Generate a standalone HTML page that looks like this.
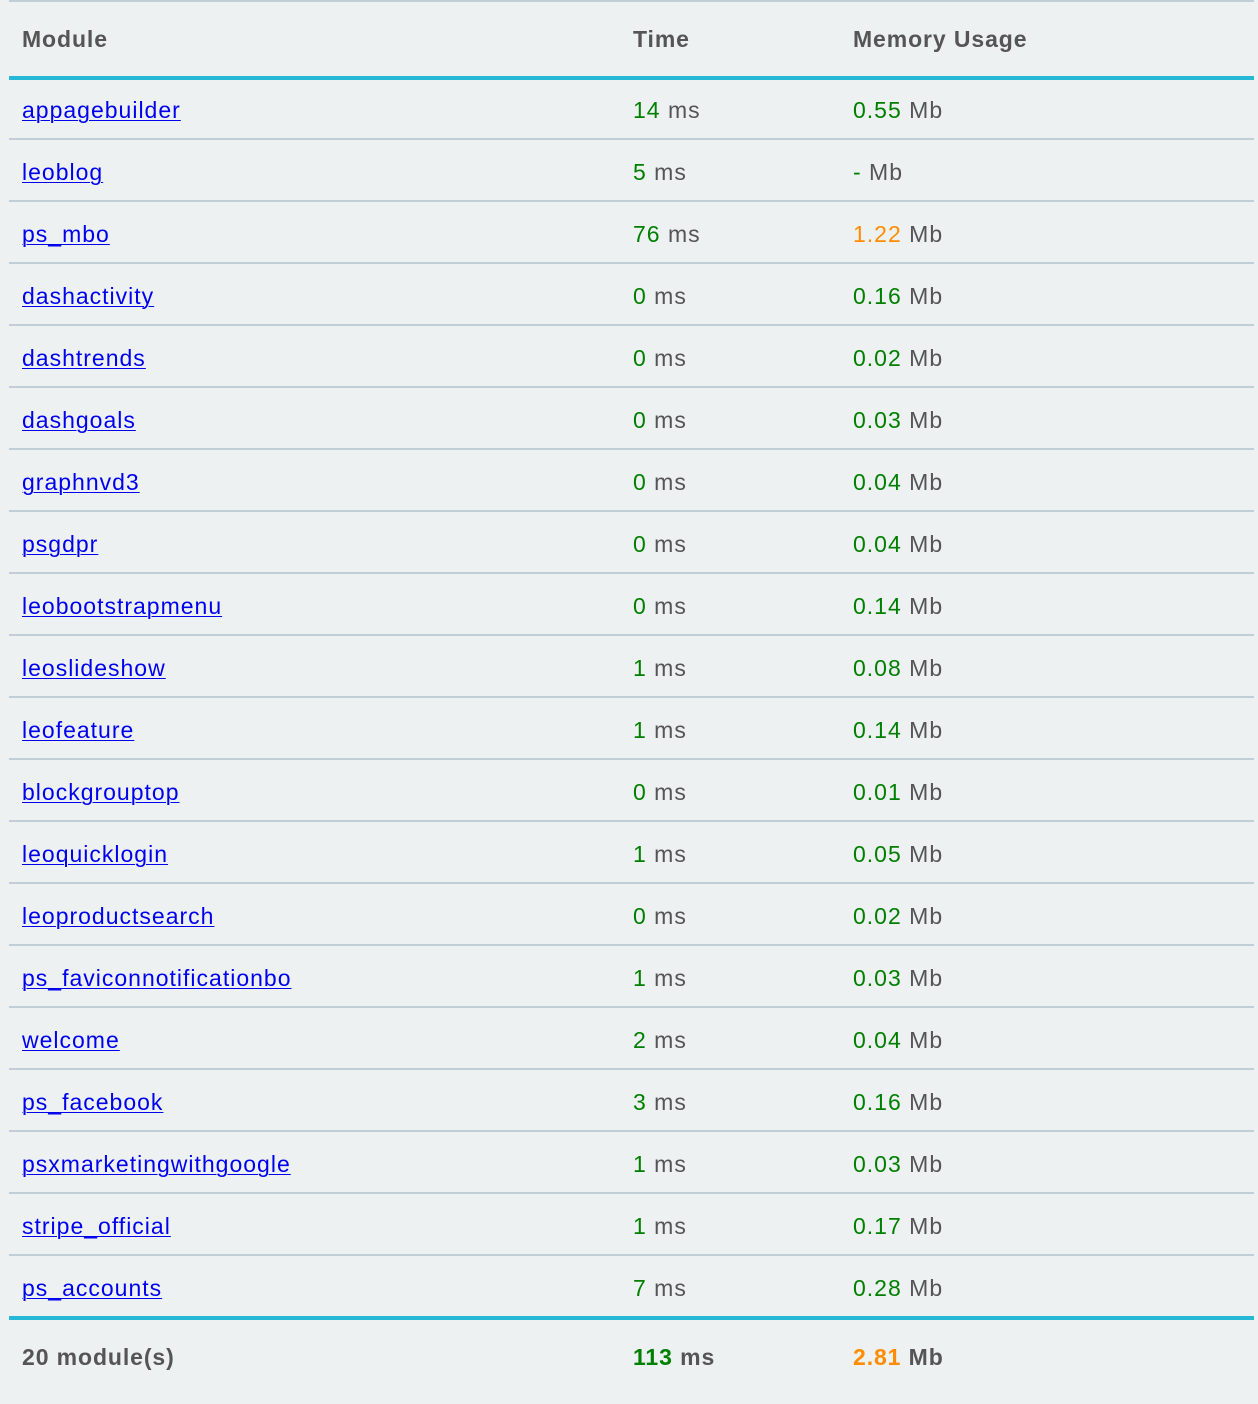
<!DOCTYPE html>
<html><head><meta charset="utf-8"><style>
html,body{margin:0;padding:0;background:#edf1f2;width:1258px;height:1402px;overflow:hidden}
body{font-family:"Liberation Sans",sans-serif;font-size:23px;letter-spacing:1px;color:#555}
.wrap{position:absolute;left:9px;top:0;width:1245px;height:1402px;border-top:2px solid #c0ced6;box-sizing:border-box}
.r{position:absolute;left:0;width:1245px;height:62px;border-bottom:2px solid #c0ced6;box-sizing:border-box}
.c{position:absolute;top:2px;line-height:60px;white-space:nowrap}
.c1{left:13px}.c2{left:624px}.c3{left:844px}
a{color:#0000ee;text-decoration:underline;text-decoration-thickness:1px;text-underline-offset:2px}
.g{color:#008000}.o{color:#ff8c00}
.h{font-weight:bold;letter-spacing:0.9px}
.h .c{top:-1px}
</style></head><body>
<div class="wrap">
<div class="r h" style="top:-2px;height:80px;border-bottom:4px solid #25b9d7"><span class="c c1" style="line-height:80px">Module</span><span class="c c2" style="line-height:80px">Time</span><span class="c c3" style="line-height:80px">Memory Usage</span></div>
<div class="r h" style="top:1314px;height:88px;border-top:4px solid #25b9d7;border-bottom:none"><span class="c c1" style="line-height:76px">20 module(s)</span><span class="c c2" style="line-height:76px"><span class="g">113</span> ms</span><span class="c c3" style="line-height:76px"><span class="o">2.81</span> Mb</span></div>
</div>
<div style="position:absolute;left:9px;top:0">
<div class="r" style="top:78px"><span class="c c1"><a>appagebuilder</a></span><span class="c c2"><span class="g">14</span> ms</span><span class="c c3"><span class="g">0.55</span> Mb</span></div>
<div class="r" style="top:140px"><span class="c c1"><a>leoblog</a></span><span class="c c2"><span class="g">5</span> ms</span><span class="c c3"><span class="g">-</span> Mb</span></div>
<div class="r" style="top:202px"><span class="c c1"><a>ps_mbo</a></span><span class="c c2"><span class="g">76</span> ms</span><span class="c c3"><span class="o">1.22</span> Mb</span></div>
<div class="r" style="top:264px"><span class="c c1"><a>dashactivity</a></span><span class="c c2"><span class="g">0</span> ms</span><span class="c c3"><span class="g">0.16</span> Mb</span></div>
<div class="r" style="top:326px"><span class="c c1"><a>dashtrends</a></span><span class="c c2"><span class="g">0</span> ms</span><span class="c c3"><span class="g">0.02</span> Mb</span></div>
<div class="r" style="top:388px"><span class="c c1"><a>dashgoals</a></span><span class="c c2"><span class="g">0</span> ms</span><span class="c c3"><span class="g">0.03</span> Mb</span></div>
<div class="r" style="top:450px"><span class="c c1"><a>graphnvd3</a></span><span class="c c2"><span class="g">0</span> ms</span><span class="c c3"><span class="g">0.04</span> Mb</span></div>
<div class="r" style="top:512px"><span class="c c1"><a>psgdpr</a></span><span class="c c2"><span class="g">0</span> ms</span><span class="c c3"><span class="g">0.04</span> Mb</span></div>
<div class="r" style="top:574px"><span class="c c1"><a>leobootstrapmenu</a></span><span class="c c2"><span class="g">0</span> ms</span><span class="c c3"><span class="g">0.14</span> Mb</span></div>
<div class="r" style="top:636px"><span class="c c1"><a>leoslideshow</a></span><span class="c c2"><span class="g">1</span> ms</span><span class="c c3"><span class="g">0.08</span> Mb</span></div>
<div class="r" style="top:698px"><span class="c c1"><a>leofeature</a></span><span class="c c2"><span class="g">1</span> ms</span><span class="c c3"><span class="g">0.14</span> Mb</span></div>
<div class="r" style="top:760px"><span class="c c1"><a>blockgrouptop</a></span><span class="c c2"><span class="g">0</span> ms</span><span class="c c3"><span class="g">0.01</span> Mb</span></div>
<div class="r" style="top:822px"><span class="c c1"><a>leoquicklogin</a></span><span class="c c2"><span class="g">1</span> ms</span><span class="c c3"><span class="g">0.05</span> Mb</span></div>
<div class="r" style="top:884px"><span class="c c1"><a>leoproductsearch</a></span><span class="c c2"><span class="g">0</span> ms</span><span class="c c3"><span class="g">0.02</span> Mb</span></div>
<div class="r" style="top:946px"><span class="c c1"><a>ps_faviconnotificationbo</a></span><span class="c c2"><span class="g">1</span> ms</span><span class="c c3"><span class="g">0.03</span> Mb</span></div>
<div class="r" style="top:1008px"><span class="c c1"><a>welcome</a></span><span class="c c2"><span class="g">2</span> ms</span><span class="c c3"><span class="g">0.04</span> Mb</span></div>
<div class="r" style="top:1070px"><span class="c c1"><a>ps_facebook</a></span><span class="c c2"><span class="g">3</span> ms</span><span class="c c3"><span class="g">0.16</span> Mb</span></div>
<div class="r" style="top:1132px"><span class="c c1"><a>psxmarketingwithgoogle</a></span><span class="c c2"><span class="g">1</span> ms</span><span class="c c3"><span class="g">0.03</span> Mb</span></div>
<div class="r" style="top:1194px"><span class="c c1"><a>stripe_official</a></span><span class="c c2"><span class="g">1</span> ms</span><span class="c c3"><span class="g">0.17</span> Mb</span></div>
<div class="r" style="top:1256px;border-bottom:none"><span class="c c1"><a>ps_accounts</a></span><span class="c c2"><span class="g">7</span> ms</span><span class="c c3"><span class="g">0.28</span> Mb</span></div>
</div>
</body></html>
